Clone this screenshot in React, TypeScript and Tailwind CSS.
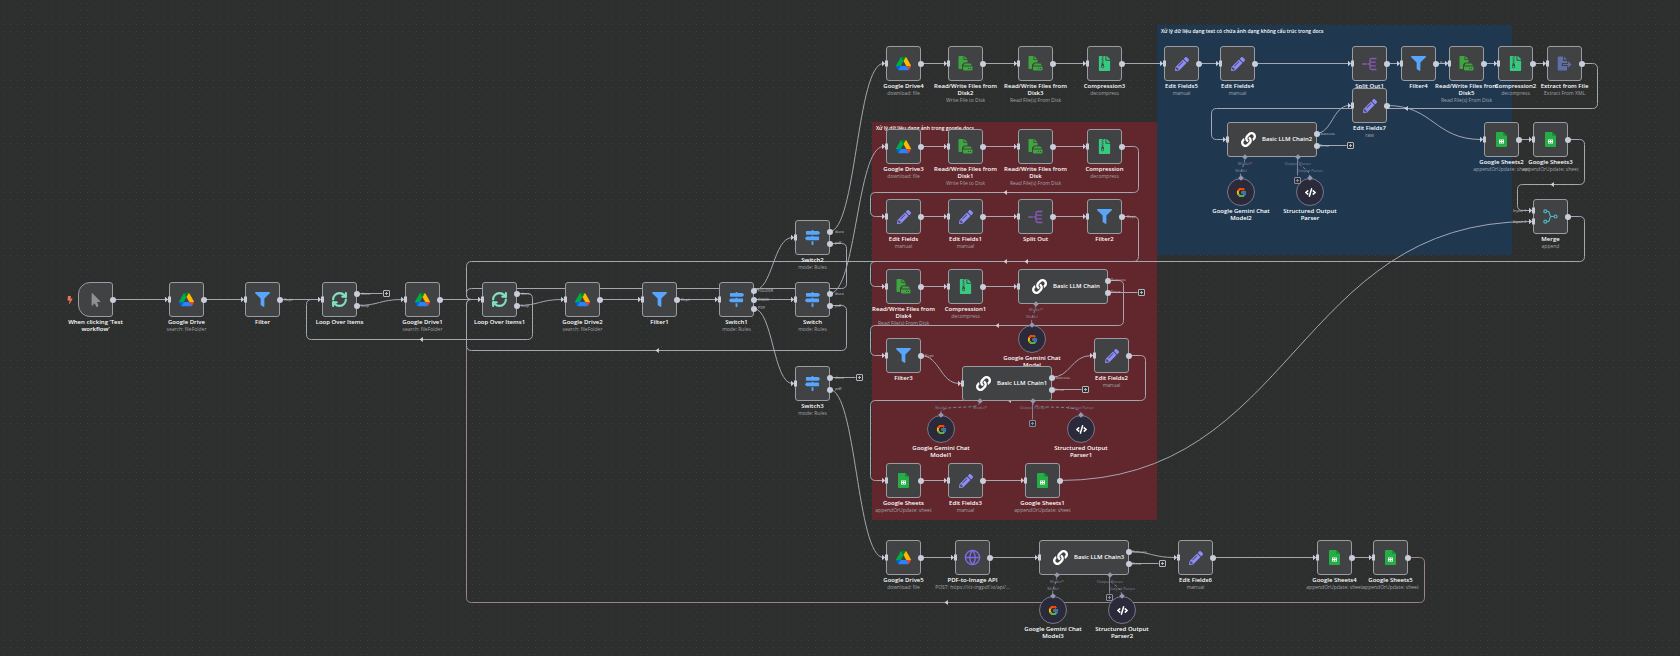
import React from "react";
import { FaFilter, FaMapSigns, FaLink, FaPencilAlt, FaMousePointer, FaCode, FaFileArchive, FaBolt } from "react-icons/fa";
import { FcGoogle } from "react-icons/fc";
import { Globe, RefreshCw } from "lucide-react";

type IconName =
  | "trigger" | "drive" | "filter" | "loop" | "switch" | "disk" | "zip" | "pen"
  | "split" | "extract" | "sheets" | "merge" | "globe";

type FlowNode = {
  x: number;
  y: number;
  icon: IconName;
  title: string[];
  sub?: string;
};

type Chain = { x: number; y: number; title: string; parser: boolean };
type SubNode = { x: number; y: number; icon: "google" | "code"; title: string[] };

const nodes: FlowNode[] = [
  { x: 78, y: 300, icon: "trigger", title: ["When clicking ‘Test", "workflow’"] },
  { x: 169, y: 300, icon: "drive", title: ["Google Drive"], sub: "search: fileFolder" },
  { x: 245, y: 300, icon: "filter", title: ["Filter"] },
  { x: 322, y: 300, icon: "loop", title: ["Loop Over Items"] },
  { x: 405, y: 300, icon: "drive", title: ["Google Drive1"], sub: "search: fileFolder" },
  { x: 482, y: 300, icon: "loop", title: ["Loop Over Items1"] },
  { x: 565, y: 300, icon: "drive", title: ["Google Drive2"], sub: "search: fileFolder" },
  { x: 642, y: 300, icon: "filter", title: ["Filter1"] },
  { x: 719, y: 300, icon: "switch", title: ["Switch1"], sub: "mode: Rules" },
  { x: 795, y: 238, icon: "switch", title: ["Switch2"], sub: "mode: Rules" },
  { x: 795, y: 300, icon: "switch", title: ["Switch"], sub: "mode: Rules" },
  { x: 795, y: 384, icon: "switch", title: ["Switch3"], sub: "mode: Rules" },

  { x: 886, y: 64, icon: "drive", title: ["Google Drive4"], sub: "download: file" },
  { x: 948, y: 64, icon: "disk", title: ["Read/Write Files from", "Disk2"], sub: "Write File to Disk" },
  { x: 1018, y: 64, icon: "disk", title: ["Read/Write Files from", "Disk3"], sub: "Read File(s) From Disk" },
  { x: 1087, y: 64, icon: "zip", title: ["Compression3"], sub: "decompress" },
  { x: 1164, y: 64, icon: "pen", title: ["Edit Fields5"], sub: "manual" },
  { x: 1220, y: 64, icon: "pen", title: ["Edit Fields4"], sub: "manual" },
  { x: 1352, y: 64, icon: "split", title: ["Split Out1"] },
  { x: 1401, y: 64, icon: "filter", title: ["Filter4"] },
  { x: 1449, y: 64, icon: "disk", title: ["Read/Write Files from", "Disk5"], sub: "Read File(s) From Disk" },
  { x: 1498, y: 64, icon: "zip", title: ["Compression2"], sub: "decompress" },
  { x: 1547, y: 64, icon: "extract", title: ["Extract from File"], sub: "Extract From XML" },
  { x: 1352, y: 106, icon: "pen", title: ["Edit Fields7"], sub: "raw" },
  { x: 1484, y: 140, icon: "sheets", title: ["Google Sheets2"], sub: "appendOrUpdate: sheet" },
  { x: 1533, y: 140, icon: "sheets", title: ["Google Sheets3"], sub: "appendOrUpdate: sheet" },
  { x: 1533, y: 217, icon: "merge", title: ["Merge"], sub: "append" },

  { x: 886, y: 147, icon: "drive", title: ["Google Drive3"], sub: "download: file" },
  { x: 948, y: 147, icon: "disk", title: ["Read/Write Files from", "Disk1"], sub: "Write File to Disk" },
  { x: 1018, y: 147, icon: "disk", title: ["Read/Write Files from", "Disk"], sub: "Read File(s) From Disk" },
  { x: 1087, y: 147, icon: "zip", title: ["Compression"], sub: "decompress" },
  { x: 886, y: 217, icon: "pen", title: ["Edit Fields"], sub: "manual" },
  { x: 948, y: 217, icon: "pen", title: ["Edit Fields1"], sub: "manual" },
  { x: 1018, y: 217, icon: "split", title: ["Split Out"] },
  { x: 1087, y: 217, icon: "filter", title: ["Filter2"] },
  { x: 886, y: 287, icon: "disk", title: ["Read/Write Files from", "Disk4"], sub: "Read File(s) From Disk" },
  { x: 948, y: 287, icon: "zip", title: ["Compression1"], sub: "decompress" },
  { x: 886, y: 356, icon: "filter", title: ["Filter3"] },
  { x: 1094, y: 356, icon: "pen", title: ["Edit Fields2"], sub: "manual" },
  { x: 886, y: 481, icon: "sheets", title: ["Google Sheets"], sub: "appendOrUpdate: sheet" },
  { x: 948, y: 481, icon: "pen", title: ["Edit Fields3"], sub: "manual" },
  { x: 1025, y: 481, icon: "sheets", title: ["Google Sheets1"], sub: "appendOrUpdate: sheet" },

  { x: 886, y: 558, icon: "drive", title: ["Google Drive5"], sub: "download: file" },
  { x: 955, y: 558, icon: "globe", title: ["PDF-to-Image API"], sub: "POST: https://ict-tngpdf.io/api/..." },
  { x: 1178, y: 558, icon: "pen", title: ["Edit Fields6"], sub: "manual" },
  { x: 1317, y: 558, icon: "sheets", title: ["Google Sheets4"], sub: "appendOrUpdate: sheet" },
  { x: 1373, y: 558, icon: "sheets", title: ["Google Sheets5"], sub: "appendOrUpdate: sheet" },
];

const chains: Chain[] = [
  { x: 1227, y: 140, title: "Basic LLM Chain2", parser: true },
  { x: 1018, y: 287, title: "Basic LLM Chain", parser: false },
  { x: 962, y: 384, title: "Basic LLM Chain1", parser: true },
  { x: 1039, y: 558, title: "Basic LLM Chain3", parser: true },
];

const subNodes: SubNode[] = [
  { x: 1241, y: 192, icon: "google", title: ["Google Gemini Chat", "Model2"] },
  { x: 1310, y: 192, icon: "code", title: ["Structured Output", "Parser"] },
  { x: 1032, y: 339, icon: "google", title: ["Google Gemini Chat", "Model"] },
  { x: 941, y: 429, icon: "google", title: ["Google Gemini Chat", "Model1"] },
  { x: 1081, y: 429, icon: "code", title: ["Structured Output", "Parser1"] },
  { x: 1053, y: 610, icon: "google", title: ["Google Gemini Chat", "Model3"] },
  { x: 1122, y: 610, icon: "code", title: ["Structured Output", "Parser2"] },
];

const straight: number[][] = [
  [114, 167, 300], [204, 243, 300], [280, 320, 300], [440, 480, 300], [600, 640, 300], [677, 717, 300], [754, 793, 300],
  [921, 946, 64], [983, 1016, 64], [1053, 1085, 64], [1122, 1162, 64], [1199, 1218, 64], [1255, 1350, 64],
  [1387, 1399, 64], [1436, 1447, 64], [1484, 1496, 64], [1533, 1545, 64], [1519, 1531, 140],
  [921, 946, 147], [983, 1016, 147], [1053, 1085, 147],
  [921, 946, 217], [983, 1016, 217], [1053, 1085, 217],
  [921, 946, 287], [983, 1016, 287], [921, 946, 481], [983, 1023, 481],
  [921, 953, 558], [990, 1037, 558], [1213, 1315, 558], [1352, 1371, 558],
  [357, 383, 294], [830, 856, 378], [1107, 1138, 293], [1051, 1082, 390], [1316, 1347, 146], [1128, 1159, 564],
];

// Smooth connections: x1, y1, x2, y2
const curves: number[][] = [
  [357, 306, 403, 300], [517, 306, 563, 300], [754, 291, 793, 238], [754, 309, 793, 384],
  [830, 232, 884, 64], [830, 294, 884, 147], [830, 390, 884, 558],
  [921, 356, 960, 384], [1051, 378, 1092, 356], [1060, 481, 1531, 222],
  [1316, 134, 1350, 106], [1387, 106, 1482, 140], [1128, 552, 1176, 558],
];

// Backward connections: a polyline with rounded corners
const loops: { pts: number[][]; arrow?: number[]; warm?: boolean }[] = [
  { pts: [[1408, 558], [1425, 558], [1425, 603], [467, 603], [467, 300], [480, 300]], arrow: [947, 603], warm: true },
  { pts: [[1568, 217], [1585, 217], [1585, 262], [467, 262], [467, 300], [480, 300]], arrow: [1027, 262] },
  { pts: [[517, 294], [533, 294], [533, 340], [307, 340], [307, 300], [320, 300]], arrow: [422, 340] },
  { pts: [[830, 244], [847, 244], [847, 289], [467, 289], [467, 300], [480, 300]] },
  { pts: [[830, 306], [847, 306], [847, 351], [467, 351], [467, 300], [480, 300]], arrow: [658, 351] },
  { pts: [[1122, 147], [1139, 147], [1139, 193], [871, 193], [871, 217], [884, 217]], arrow: [1006, 193] },
  { pts: [[1122, 217], [1139, 217], [1139, 262], [871, 262], [871, 287], [884, 287]], arrow: [1006, 262] },
  { pts: [[1107, 281], [1124, 281], [1124, 326], [871, 326], [871, 356], [884, 356]], arrow: [998, 326] },
  { pts: [[1129, 356], [1146, 356], [1146, 401], [871, 401], [871, 481], [884, 481]], arrow: [1010, 401] },
  { pts: [[1568, 140], [1585, 140], [1585, 185], [1518, 185], [1518, 211], [1531, 211]], arrow: [1553, 185] },
  { pts: [[1582, 64], [1598, 64], [1598, 109], [1212, 109], [1212, 140], [1225, 140]], arrow: [1407, 109] },
];

const dashed = [
  "M1245 160C1245 168 1241 168 1241 177",
  "M1298 160C1298 168 1310 168 1310 177",
  "M1036 306C1036 314 1032 314 1032 324",
  "M980 403C980 412 941 403 941 414",
  "M1033 403C1033 412 1081 403 1081 414",
  "M1057 577C1057 586 1053 586 1053 595",
  "M1110 577C1110 586 1122 586 1122 595",
];

const stems: number[][] = [[1298, 158, 176], [1033, 402, 420], [1110, 576, 594]];

const plusButtons: { x: number; y: number; dim?: boolean }[] = [
  { x: 387, y: 294 }, { x: 860, y: 378 }, { x: 1142, y: 293 }, { x: 1086, y: 390 }, { x: 1351, y: 146 }, { x: 1163, y: 564 },
  { x: 1298, y: 181, dim: true }, { x: 1033, y: 424, dim: true }, { x: 1110, y: 598, dim: true },
];

const edgeLabels: { x: number; y: number; text: string }[] = [
  { x: 284, y: 300, text: "Kept" }, { x: 361, y: 294, text: "done" }, { x: 361, y: 306, text: "loop" },
  { x: 521, y: 294, text: "done" }, { x: 521, y: 306, text: "loop" }, { x: 681, y: 300, text: "Kept" },
  { x: 758, y: 291, text: "FOLDER" }, { x: 758, y: 300, text: "DOCX" }, { x: 758, y: 308, text: "PDF" },
  { x: 835, y: 232, text: "docx" }, { x: 835, y: 243, text: "pdf" },
  { x: 835, y: 294, text: "docx" }, { x: 835, y: 306, text: "pdf" },
  { x: 835, y: 378, text: "docx" }, { x: 835, y: 389, text: "pdf" },
  { x: 1440, y: 63, text: "Kept" }, { x: 1127, y: 217, text: "Kept" }, { x: 925, y: 356, text: "Kept" },
  { x: 1111, y: 280, text: "Success" }, { x: 1111, y: 292, text: "Error" },
  { x: 1055, y: 378, text: "Success" }, { x: 1055, y: 390, text: "Error" },
  { x: 1320, y: 134, text: "Success" }, { x: 1320, y: 146, text: "Error" },
  { x: 1132, y: 552, text: "Success" }, { x: 1132, y: 564, text: "Error" },
  { x: 1513, y: 211, text: "Input 1" }, { x: 1513, y: 222, text: "Input 2" },
];

const aiLabels: { x: number; y: number; text: string; required?: boolean }[] = [
  { x: 1245, y: 164, text: "Model", required: true }, { x: 1241, y: 171, text: "Model" },
  { x: 1298, y: 164, text: "Output Parser" }, { x: 1310, y: 171, text: "Output Parser" },
  { x: 1036, y: 310, text: "Model", required: true }, { x: 1032, y: 317, text: "Model" },
  { x: 980, y: 408, text: "Model", required: true }, { x: 941, y: 408, text: "Model" },
  { x: 1033, y: 408, text: "Output Parser" }, { x: 1081, y: 408, text: "Output Parser" },
  { x: 1057, y: 582, text: "Model", required: true }, { x: 1053, y: 589, text: "Model" },
  { x: 1110, y: 582, text: "Output Parser" }, { x: 1122, y: 589, text: "Output Parser" },
];

const inputsOf = (n: FlowNode): number[] => {
  if (n.icon === "trigger") return [];
  if (n.icon === "merge") return [-6, 5];
  return [0];
};

const outputsOf = (n: FlowNode): number[] => {
  if (n.icon === "loop") return [-6, 6];
  if (n.icon === "switch") return n.title[0] === "Switch1" ? [-9, 0, 9] : [-6, 6];
  return [0];
};

function roundedPath(pts: number[][]): string {
  let d = `M${pts[0][0]} ${pts[0][1]}`;
  for (let i = 1; i < pts.length - 1; i++) {
    const [px, py] = pts[i - 1];
    const [x, y] = pts[i];
    const [nx, ny] = pts[i + 1];
    const lenIn = Math.abs(x - px) + Math.abs(y - py);
    const lenOut = Math.abs(nx - x) + Math.abs(ny - y);
    const r = Math.min(5, lenIn / 2, lenOut / 2);
    const ax = x - Math.sign(x - px) * r;
    const ay = y - Math.sign(y - py) * r;
    const bx = x + Math.sign(nx - x) * r;
    const by = y + Math.sign(ny - y) * r;
    d += `L${ax} ${ay}Q${x} ${y} ${bx} ${by}`;
  }
  const last = pts[pts.length - 1];
  return d + `L${last[0]} ${last[1]}`;
}

function NodeIcon({ name }: { name: IconName }) {
  switch (name) {
    case "trigger":
      return <FaMousePointer className="size-[14px] text-[#8f9092]" />;
    case "drive":
      return (
        <svg viewBox="0 0 87.3 78" className="size-[15px]">
          <path fill="#0066da" d="m6.6 66.85 3.85 6.65c.8 1.4 1.95 2.5 3.3 3.3l13.75-23.8h-27.5c0 1.55.4 3.1 1.2 4.5z" />
          <path fill="#00ac47" d="m43.65 25-13.75-23.8c-1.35.8-2.5 1.9-3.3 3.3l-25.4 44a9.06 9.06 0 0 0-1.2 4.5h27.5z" />
          <path fill="#ea4335" d="m73.55 76.8c1.35-.8 2.5-1.9 3.3-3.3l1.6-2.75 7.65-13.25c.8-1.4 1.2-2.95 1.2-4.5h-27.502l5.852 11.5z" />
          <path fill="#00832d" d="m43.65 25 13.75-23.8c-1.35-.8-2.9-1.2-4.5-1.2h-18.5c-1.6 0-3.15.45-4.5 1.2z" />
          <path fill="#2684fc" d="m59.8 53h-32.3l-13.75 23.8c1.35.8 2.9 1.2 4.5 1.2h50.8c1.6 0 3.15-.45 4.5-1.2z" />
          <path fill="#ffba00" d="m73.4 26.5-12.7-22c-.8-1.4-1.95-2.5-3.3-3.3l-13.75 23.8 16.15 28h27.45c0-1.55-.4-3.1-1.2-4.5z" />
        </svg>
      );
    case "filter":
      return <FaFilter className="size-[15px] text-[#57a6fb]" />;
    case "loop":
      return <RefreshCw className="size-[17px] text-[#7fe3c1]" strokeWidth={3} />;
    case "switch":
      return <FaMapSigns className="size-[15px] text-[#57a6fb]" />;
    case "disk":
      return (
        <svg viewBox="0 0 15 15" className="size-[15px]" fill="#3fa53f">
          <path d="M1.5 0H5.5V4H9.5V6.5H6L4 8.8V13H1.5Q.5 13 .5 12V1Q.5 0 1.5 0Z" />
          <path d="M6.3 0L9.5 3.2H6.3Z" />
          <path d="M6.6 7.5H12.6L14 9.6H5.2Z" />
          <path fillRule="evenodd" d="M5 10.4H14.5V13.6Q14.5 14.4 13.7 14.4H5.8Q5 14.4 5 13.6ZM10 11.9V12.9H11V11.9ZM12 11.9V12.9H13V11.9Z" />
        </svg>
      );
    case "zip":
      return <FaFileArchive className="size-[15px] text-[#37c97f]" />;
    case "pen":
      return <FaPencilAlt className="size-[14px] text-[#8d8cfa]" />;
    case "split":
      return (
        <svg viewBox="0 0 15 14" className="h-[14px] w-[15px]" fill="none" stroke="#8a57b8" strokeWidth="1.3" strokeLinecap="round">
          <path d="M.7 7H4.6M14 1.5H9.6Q8 1.5 8 3.2V10.8Q8 12.5 9.6 12.5H14M8 5.2H13.5M8 8.8H13.5M6.2 7H8" />
        </svg>
      );
    case "extract":
      return (
        <svg viewBox="0 0 15 15" className="size-[15px]" fill="#5f6fa8">
          <path d="M1.5 .5H6V5H10V7H4.8V10H10V14.5H1.5Q.7 14.5 .7 13.6V1.4Q.7 .5 1.5 .5Z" />
          <path d="M7 .5L10 3.8H7Z" />
          <path d="M6 7.9H11.6L10.2 6.2L11.2 5.4L14.6 8.5L11.2 11.6L10.2 10.8L11.6 9.1H6Z" />
        </svg>
      );
    case "sheets":
      return (
        <svg viewBox="0 0 11 15" className="h-[15px] w-[11px]">
          <path fill="#27ad45" d="M1 0H7.2L11 3.8V14Q11 15 10 15H1Q0 15 0 14V1Q0 0 1 0Z" />
          <path fill="#168a34" d="M7.2 0L11 3.8H7.2Z" />
          <path fill="#fff" fillRule="evenodd" d="M3 7.4H8V11.6H3ZM3.8 8.2V9H5.1V8.2ZM5.9 8.2V9H7.2V8.2ZM3.8 9.9V10.8H5.1V9.9ZM5.9 9.9V10.8H7.2V9.9Z" />
        </svg>
      );
    case "merge":
      return (
        <svg viewBox="0 0 15 15" className="size-[15px]" fill="none" stroke="#4fb5c6" strokeWidth="1.2">
          <circle cx="2.3" cy="2.3" r="1.5" />
          <circle cx="2.3" cy="12.7" r="1.5" />
          <circle cx="12.6" cy="7.5" r="1.5" />
          <path d="M3.8 2.3H4.6Q6 2.3 6.4 4L6.8 5.8Q7.2 7.5 9 7.5H11M3.8 12.7H4.6Q6 12.7 6.4 11L6.8 9.2Q7.2 7.5 9 7.5" />
        </svg>
      );
    case "globe":
      return <Globe className="size-[17px] text-[#7b6be0]" strokeWidth={2} />;
  }
}

function InputPort({ top }: { top: number }) {
  return (
    <svg viewBox="0 0 6 7" className="absolute left-[-5px] h-[7px] w-[6px]" style={{ top }} fill="#c9ccd9">
      <path d="M0 .8L3.2 3.5L0 6.2ZM3 .4H6V6.6H3Z" />
    </svg>
  );
}

function OutputPort({ top }: { top: number }) {
  return <span className="absolute right-[-4px] size-[6px] rounded-full bg-[#c9ccd9]" style={{ top }} />;
}

function NodeCaption({ title, sub }: { title: string[]; sub?: string }) {
  return (
    <div className="mt-[2px] text-center whitespace-nowrap">
      {title.map((line) => (
        <p key={line} className="text-[6px] leading-[7px] font-semibold text-white">{line}</p>
      ))}
      {sub && <p className="text-[5px] leading-[7px] text-[#a3a4a7]">{sub}</p>}
    </div>
  );
}

function NodeCard({ node }: { node: FlowNode }) {
  const round = node.icon === "trigger" ? "rounded-l-[12px] rounded-r-[3px]" : "rounded-[3px]";
  return (
    <article className="absolute flex w-[35px] flex-col items-center" style={{ left: node.x, top: node.y - 18 }}>
      <div className={`relative flex size-[35px] shrink-0 items-center justify-center border border-[#9b9ca1] bg-[#414244] ${round}`}>
        <NodeIcon name={node.icon} />
        {inputsOf(node).map((o) => <InputPort key={o} top={13 + o} />)}
        {outputsOf(node).map((o) => <OutputPort key={o} top={14 + o} />)}
      </div>
      <NodeCaption title={node.title} sub={node.sub} />
    </article>
  );
}

function Diamond({ left }: { left: number }) {
  return <span className="absolute bottom-[-3px] size-[4px] rotate-45 bg-[#9698b0]" style={{ left }} />;
}

function ChainCard({ chain }: { chain: Chain }) {
  return (
    <article
      className="absolute flex h-[35px] w-[90px] items-center gap-[6px] rounded-[3px] border border-[#9b9ca1] bg-[#414244] pl-[13px]"
      style={{ left: chain.x, top: chain.y - 18 }}
    >
      <FaLink className="size-[15px] text-white" />
      <p className="text-[6px] leading-[7px] font-semibold whitespace-nowrap text-white">{chain.title}</p>
      <InputPort top={13} />
      <OutputPort top={8} />
      <OutputPort top={20} />
      <Diamond left={15} />
      {chain.parser && <Diamond left={68} />}
    </article>
  );
}

function SubNodeCard({ node }: { node: SubNode }) {
  return (
    <article className="absolute flex w-[28px] flex-col items-center" style={{ left: node.x - 14, top: node.y - 14 }}>
      <div className="relative flex size-[28px] shrink-0 items-center justify-center rounded-full border border-[#77788a] bg-[#2b2a3a]">
        <span className="absolute top-[-3px] size-[4px] rotate-45 bg-[#9698b0]" />
        {node.icon === "google" ? <FcGoogle className="size-[11px]" /> : <FaCode className="size-[11px] text-white" />}
      </div>
      <NodeCaption title={node.title} />
    </article>
  );
}

function StickyNote({ className, text }: { className: string; text: string }) {
  return (
    <section className={`absolute ${className}`}>
      <p className="px-[4px] pt-[3px] text-[5px] leading-[7px] font-semibold whitespace-nowrap text-white">{text}</p>
    </section>
  );
}

function Edges() {
  return (
    <svg className="absolute top-0 left-0 h-[656px] w-[1680px] overflow-visible" viewBox="0 0 1680 656" fill="none" stroke="#a4a6b0">
      <g transform="translate(-0.5 -0.5)">
        {loops.map((l, i) => (
          <path key={i} d={roundedPath(l.pts)} stroke={l.warm ? "#9c8388" : "#a4a6b0"} />
        ))}
        {straight.map(([x1, x2, y]) => <path key={`${x1}-${y}`} d={`M${x1} ${y}H${x2}`} />)}
        {curves.map(([x1, y1, x2, y2]) => {
          const m = (x1 + x2) / 2;
          return <path key={`${x1}-${y1}`} d={`M${x1} ${y1}C${m} ${y1} ${m} ${y2} ${x2} ${y2}`} />;
        })}
        {dashed.map((d) => <path key={d} d={d} stroke="#7f8197" strokeDasharray="3 2" />)}
        {stems.map(([x, y1, y2]) => <path key={x} d={`M${x} ${y1}V${y2}`} stroke="#7f8197" />)}
        {loops.map((l, i) =>
          l.arrow ? (
            <path key={i} stroke="none" fill="#d2d3da" d={`M${l.arrow[0] - 2} ${l.arrow[1]}l3.4 -2.6v5.2z`} />
          ) : null,
        )}
      </g>
    </svg>
  );
}

export default function App() {
  return (
    <main className="relative min-h-screen w-full overflow-hidden bg-[#2d2e2e] bg-[radial-gradient(circle_at_center,#3d3e3e_0,#2d2e2e_1px)] bg-[length:7px_7px] font-['Open_Sans','Noto_Sans',sans-serif]">
      <StickyNote
        className="top-[122px] left-[872px] h-[398px] w-[285px] bg-[#62262d]"
        text="Xử lý dữ liệu dạng ảnh trong google docs"
      />
      <StickyNote
        className="top-[25px] left-[1157px] h-[230px] w-[355px] bg-[#1f3850]"
        text="Xử lý dữ liệu dạng text có chứa ảnh dạng không cấu trúc trong docs"
      />
      <Edges />

      {edgeLabels.map((l) => (
        <span
          key={`${l.x}-${l.y}`}
          className="absolute -translate-y-1/2 text-[4px] leading-[4px] whitespace-nowrap text-[#c3c4cb]"
          style={{ left: l.x, top: l.y }}
        >
          {l.text}
        </span>
      ))}

      <FaBolt className="absolute top-[296px] left-[66px] size-[8px] text-[#f0705c]" />

      {nodes.map((n) => <NodeCard key={n.title.join(" ")} node={n} />)}
      {subNodes.map((n) => <SubNodeCard key={n.title.join(" ")} node={n} />)}
      {chains.map((c) => <ChainCard key={c.title} chain={c} />)}

      {aiLabels.map((l) => (
        <span
          key={`${l.x}-${l.y}`}
          className="absolute -translate-x-1/2 -translate-y-1/2 text-[4px] leading-[4px] whitespace-nowrap text-[#8586a0]"
          style={{ left: l.x, top: l.y }}
        >
          {l.text}
          {l.required && <span className="text-[#e0605c]">*</span>}
        </span>
      ))}

      {plusButtons.map((b) => (
        <button
          key={`${b.x}-${b.y}`}
          type="button"
          aria-label="Add node"
          className={`absolute flex size-[7px] items-center justify-center rounded-[1px] border bg-[#2d2e2e] ${b.dim ? "border-[#8a8ba0]" : "border-[#b4b5bd]"}`}
          style={{ left: b.x - 4, top: b.y - 4 }}
        >
          <svg viewBox="0 0 3 3" className="size-[3px]" stroke={b.dim ? "#8a8ba0" : "#b4b5bd"} strokeWidth="1">
            <path d="M0 1.5H3M1.5 0V3" />
          </svg>
        </button>
      ))}
    </main>
  );
}
